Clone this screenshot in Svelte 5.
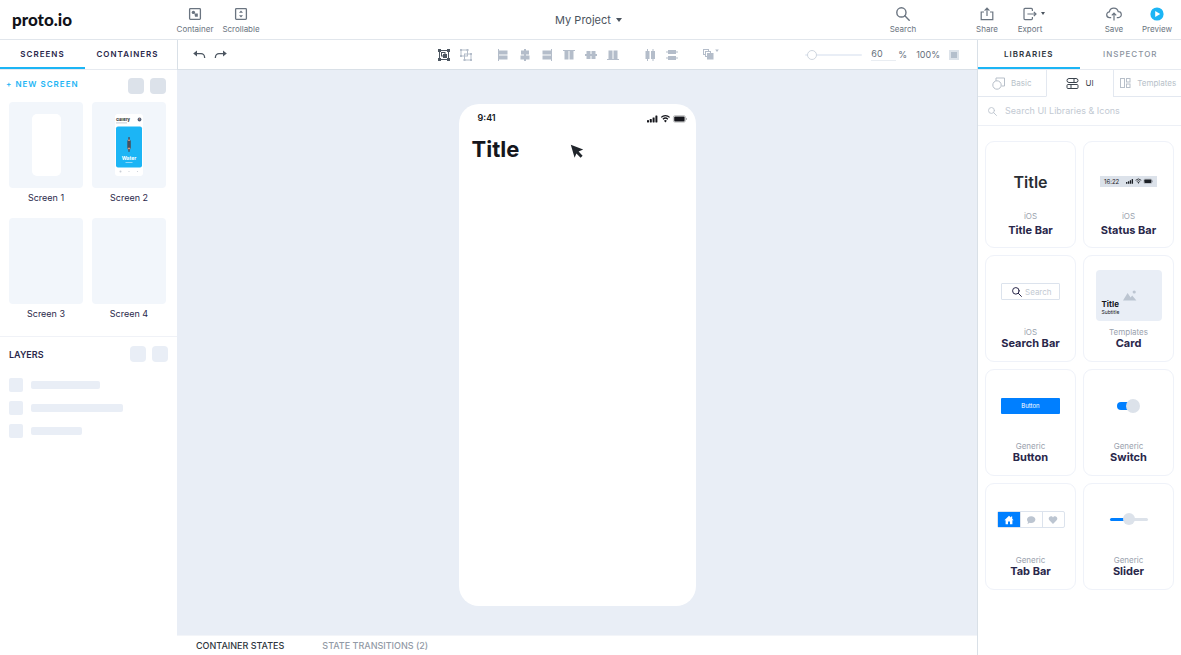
<script>
  let leftTab = $state('Screens');
  let rightTab = $state('Libraries');
  let library = $state('UI');
  let bottomTab = $state('Container states');
  let zoom = $state(60);

  const screens = ['Screen 1', 'Screen 2', 'Screen 3', 'Screen 4'];
  const layers = [69, 92, 51];

  const widgets = [
    { kind: 'title', source: 'iOS', name: 'Title Bar', spaced: true },
    { kind: 'status', source: 'iOS', name: 'Status Bar', spaced: true },
    { kind: 'search', source: 'iOS', name: 'Search Bar' },
    { kind: 'card', source: 'Templates', name: 'Card' },
    { kind: 'button', source: 'Generic', name: 'Button' },
    { kind: 'switch', source: 'Generic', name: 'Switch' },
    { kind: 'tabs', source: 'Generic', name: 'Tab Bar' },
    { kind: 'slider', source: 'Generic', name: 'Slider' },
  ];

  // align + distribute icons, as rects on a 14x14 grid
  const align = [
    { label: 'Align left', rects: [[2, 1, 1, 12], [3, 2.5, 8.5, 4], [3, 7.5, 8.5, 4]] },
    { label: 'Align center', rects: [[6, 1, 2, 12], [3, 2.5, 8, 4], [2.5, 7.5, 9, 4]] },
    { label: 'Align right', rects: [[11, 1, 1, 12], [2.5, 2.5, 8.5, 4], [2.5, 7.5, 8.5, 4]] },
    { label: 'Align top', rects: [[1, 2, 12, 1], [2.5, 3, 4, 8.5], [7.5, 3, 4, 8.5]] },
    { label: 'Align middle', rects: [[1, 6, 12, 2], [2.5, 3, 4, 8], [7.5, 3, 4, 8]] },
    { label: 'Align bottom', rects: [[1, 11, 12, 1], [2.5, 2.5, 4, 8.5], [7.5, 2.5, 4, 8.5]] },
  ];
  const distribute = [
    { label: 'Distribute horizontally', rects: [[2.5, 3, 4, 8], [8, 3, 4, 8], [4, 1, 1, 12], [9.5, 1, 1, 12]] },
    { label: 'Distribute vertically', rects: [[3, 2, 8, 4], [3, 8, 8, 4], [1, 3.5, 12, 1], [1, 9.5, 12, 1]] },
  ];
</script>

{#snippet magnifier(size)}
  <svg width={size} height={size} viewBox="0 0 14 14" fill="none" stroke="currentColor" stroke-width="1.4" stroke-linecap="round">
    <circle cx="5.4" cy="5.4" r="4.6" />
    <path d="M8.8 8.8 13.2 13.2" />
  </svg>
{/snippet}

{#snippet signal(width)}
  <svg {width} viewBox="0 0 40 9" fill="currentColor">
    <rect x="0" y="6" width="2" height="2.4" rx=".4" />
    <rect x="2.8" y="5" width="2" height="3.4" rx=".4" />
    <rect x="5.6" y="3.4" width="2" height="5" rx=".4" />
    <rect x="8.4" y="1.6" width="2" height="6.8" rx=".4" />
    <path d="M14.2 3.4a6 6 0 0 1 8.4 0M15.9 5.2a3.6 3.6 0 0 1 5 0" fill="none" stroke="currentColor" stroke-width="1.2" />
    <path d="m18.4 8.4-1.4-1.6a2 2 0 0 1 2.8 0z" />
    <rect x="26.4" y="1.6" width="12" height="6.6" rx="1.6" fill="none" stroke="currentColor" stroke-width=".5" opacity=".5" />
    <rect x="27.2" y="2.4" width="10.4" height="5" rx="1" />
    <path d="M39 3.8v2.2q.8-.4.8-1.1t-.8-1.1" opacity=".5" />
  </svg>
{/snippet}

{#snippet rectIcon(icon)}
  <button class="tool" aria-label={icon.label}>
    <svg width="14" height="14" fill="currentColor">
      {#each icon.rects as [x, y, width, height]}
        <rect {x} {y} {width} {height} />
      {/each}
    </svg>
  </button>
{/snippet}

<div class="app">
  <header class="topbar">
    <div class="top-left">
      <a class="logo" href="#home">proto.io</a>
      <button class="action">
        <svg width="14" height="14" fill="none" stroke="currentColor" stroke-width="1.3">
          <rect x="1.6" y="1.6" width="10.8" height="10.8" rx=".8" />
          <circle cx="5.4" cy="5.4" r="1.7" fill="currentColor" stroke="none" />
          <path d="M6.4 6.4h3.4v3.4H7z" fill="currentColor" stroke="none" />
        </svg>
        Container
      </button>
      <button class="action">
        <svg width="14" height="14" fill="none" stroke="currentColor" stroke-width="1.3">
          <rect x="1.6" y="1.6" width="10.8" height="10.8" rx=".8" />
          <path d="m7 3.4 2 2.4H5zM7 10.6l2-2.4H5z" fill="currentColor" stroke="none" />
        </svg>
        Scrollable
      </button>
    </div>
    <button class="project">My Project <span class="caret"></span></button>
    <div class="top-right">
      <div class="actions">
        <button class="action">{@render magnifier(14)}Search</button>
      </div>
      <div class="actions">
        <button class="action">
          <svg width="14" height="14" fill="none" stroke="currentColor" stroke-width="1.2">
            <path d="M4 5H1.2v7.6h11.6V5H10M7 9V1.4M4.6 3.6 7 1.2l2.4 2.4" />
          </svg>
          Share
        </button>
        <button class="action">
          <span class="with-caret">
            <svg width="14" height="14" fill="none" stroke="currentColor" stroke-width="1.2">
              <path d="M9.4 4V2.4a1 1 0 0 0-1-1H2a1 1 0 0 0-1 1v9.2a1 1 0 0 0 1 1h6.4a1 1 0 0 0 1-1V10M4.4 7H13M10.8 4.8 13 7l-2.2 2.2" />
            </svg>
            <span class="caret small"></span>
          </span>
          Export
        </button>
      </div>
      <div class="actions">
        <button class="action">
          <svg width="16" height="14" fill="none" stroke="currentColor" stroke-width="1.2">
            <path d="M5.2 10.6H3.8a2.9 2.9 0 0 1-.4-5.8 4.5 4.5 0 0 1 8.8-.2 3 3 0 0 1 .2 6h-1.6M8 13.4V6.2M5.8 8.4 8 6.2l2.200 2.200" />
          </svg>
          Save
        </button>
        <button class="action">
          <svg width="14" height="14">
            <circle cx="7" cy="7" r="6.6" fill="#1cb5f5" />
            <path d="M5.2 4v6l5-3z" fill="#fff" />
          </svg>
          Preview
        </button>
      </div>
    </div>
  </header>

  <main class="workspace">
    <aside class="left">
      <div class="tabs">
        {#each ['Screens', 'Containers'] as tab}
          <button class:active={leftTab === tab} onclick={() => (leftTab = tab)}>{tab}</button>
        {/each}
      </div>
      <div class="panel-head">
        <button class="new-screen">+ New screen</button>
        <div class="squares dark"><span></span><span></span></div>
      </div>
      <div class="screens">
        {#each screens as name, i}
          <figure>
            <div class="thumb">
              {#if i === 0}
                <div class="blank"></div>
              {:else if i === 1}
                <svg width="28" height="62">
                  <rect width="28" height="62" rx="3" fill="#fff" />
                  <text x="1" y="7" font-size="4" font-weight="700" fill="#222">Gallery</text>
                  <rect x="1" y="8.4" width="11" height="1" fill="#c9ccd2" />
                  <circle cx="24.5" cy="5.5" r="1.9" fill="#51627c" />
                  <circle cx="24.5" cy="5" r=".8" fill="#c98f78" />
                  <rect x="1" y="12.5" width="26" height="41" rx="2" fill="#1cb5f5" />
                  <path d="M13.4 23h1.2l.3 2.6.9 1.400v7l-1.100 2.200-.2 1.800h-1l-.2-1.800-1-2.200v-7l.9-1.400z" fill="#47505f" />
                  <path d="M13.2 25.6h1.600V27h-1.600zM12.800 33.800h2.400v1.400h-2.400z" fill="#d79a80" />
                  <text x="14" y="46" font-size="5" font-weight="700" fill="#fff" text-anchor="middle">Water</text>
                  <rect x="10.5" y="48" width="7" height="1" fill="#8fd9f9" />
                  <g fill="#c9ced6">
                    <circle cx="5.5" cy="57.5" r="1" />
                    <circle cx="14" cy="57.5" r=".6" />
                    <circle cx="22.5" cy="57.5" r=".6" />
                  </g>
                </svg>
              {/if}
            </div>
            <figcaption>{name}</figcaption>
          </figure>
        {/each}
      </div>
      <section class="layers">
        <div class="layers-head">
          <h2>Layers</h2>
          <div class="squares"><span></span><span></span></div>
        </div>
        {#each layers as width}
          <div class="layer"><i></i><b style="width: {width}px"></b></div>
        {/each}
      </section>
    </aside>

    <section class="center">
      <div class="toolbar">
        <div class="tools history">
          <button class="tool" aria-label="Undo">
            <svg width="14" height="14" fill="none" stroke="currentColor" stroke-width="1.3">
              <path d="M3 5.6h6a3.6 3.6 0 0 1 3.600 3.600V10" />
              <path d="M5 2.600v6L1.200 5.600z" fill="currentColor" stroke="none" />
            </svg>
          </button>
          <button class="tool" aria-label="Redo">
            <svg width="14" height="14" fill="none" stroke="currentColor" stroke-width="1.3">
              <path d="M11 5.600H5a3.600 3.600 0 0 0-3.600 3.600V10" />
              <path d="M9 2.600v6l3.800-3z" fill="currentColor" stroke="none" />
            </svg>
          </button>
        </div>
        <div class="tool-groups">
          <div class="tools">
            <button class="tool on" aria-label="Group">
              <svg width="14" height="14" fill="none" stroke="currentColor">
                <rect x="2.5" y="2.5" width="9" height="9" />
                <path d="M1 1h3v3H1zM10 1h3v3h-3zM1 10h3v3H1zM10 10h3v3h-3z" fill="currentColor" stroke="none" />
                <rect x="4.5" y="4.5" width="3.5" height="3.5" />
                <rect x="6.5" y="6.5" width="3" height="3" fill="currentColor" />
              </svg>
            </button>
            <button class="tool" aria-label="Ungroup">
              <svg width="14" height="14" fill="none" stroke="currentColor">
                <rect x="2" y="2" width="6.5" height="6" />
                <rect x="5.5" y="6" width="6.5" height="6" />
                <path d="M1 1h2v2H1zM7.500 1h2v2h-2zM1 7h2v2H1zM11 5h2v2h-2zM4.500 11h2v2h-2zM11 11h2v2h-2z" fill="currentColor" stroke="none" />
              </svg>
            </button>
          </div>
          <div class="tools">
            {#each align as icon}{@render rectIcon(icon)}{/each}
          </div>
          <div class="tools">
            {#each distribute as icon}{@render rectIcon(icon)}{/each}
          </div>
          <button class="tool" aria-label="Arrange">
            <svg width="17" height="14" fill="none" stroke="currentColor">
              <rect x="1.5" y="1.5" width="5" height="5" />
              <rect x="3.5" y="3.5" width="5" height="5" fill="#fff" />
              <rect x="5.500" y="5.500" width="5.500" height="5.500" fill="currentColor" />
              <path d="M13.200 1.600h3.600L15 4z" fill="currentColor" stroke="none" />
            </svg>
          </button>
        </div>
        <div class="zoom">
          <input class="zoom-range" type="range" min="50" max="400" bind:value={zoom} aria-label="Zoom" />
          <label><input class="zoom-value" type="text" bind:value={zoom} />%</label>
          <button class="full">100%</button>
          <button class="fit" aria-label="Fit to screen"></button>
        </div>
      </div>

      <div class="canvas">
        <div class="phone">
          <div class="phone-status">
            <span>9:41</span>
            {@render signal(40)}
          </div>
          <h1>Title</h1>
          <svg class="cursor" width="14" height="15" viewBox="0 0 14 15">
            <path d="m.8.8 12.400 4.600-4.600 2.200 4 4.200-2 2-4.200-4.400-1.800 4.400z" fill="#20252b" />
          </svg>
        </div>
      </div>

      <footer class="states">
        {#each ['Container states', 'State transitions (2)'] as tab}
          <button class:active={bottomTab === tab} onclick={() => (bottomTab = tab)}>{tab}</button>
        {/each}
      </footer>
    </section>

    <aside class="right">
      <div class="tabs even">
        {#each ['Libraries', 'Inspector'] as tab}
          <button class:active={rightTab === tab} onclick={() => (rightTab = tab)}>{tab}</button>
        {/each}
      </div>
      <div class="sources">
        <button class:active={library === 'Basic'} onclick={() => (library = 'Basic')}>
          <svg width="13" height="13" fill="none" stroke="currentColor">
            <path d="M4 4V1h8.5v8H9.500" />
            <circle cx="5" cy="8" r="4.200" />
          </svg>
          Basic
        </button>
        <button class:active={library === 'UI'} onclick={() => (library = 'UI')}>
          <svg width="13" height="13" fill="none" stroke="currentColor">
            <rect x="1" y="1.500" width="11" height="4" rx="2" />
            <path d="M8 1.500v4M5 7.500v4" />
            <rect x="1" y="7.500" width="11" height="4" rx="1" />
          </svg>
          UI
        </button>
        <button class:active={library === 'Templates'} onclick={() => (library = 'Templates')}>
          <svg width="12" height="12" fill="none" stroke="currentColor">
            <rect x="1.500" y="1.500" width="4" height="9" />
            <rect x="7.500" y="1.500" width="3.500" height="3.500" />
            <rect x="7.500" y="7" width="3.500" height="3.500" />
          </svg>
          Templates
        </button>
      </div>
      <label class="lib-search">
        {@render magnifier(9)}
        <input type="text" placeholder="Search UI Libraries &amp; Icons" aria-label="Search UI Libraries &amp; Icons" />
      </label>
      <div class="widgets">
        {#each widgets as w}
          <article class="widget" class:spaced={w.spaced}>
            <div class="preview">
              {#if w.kind === 'title'}
                <span class="w-title">Title</span>
              {:else if w.kind === 'status'}
                <div class="w-status"><span>16:22</span>{@render signal(27)}</div>
              {:else if w.kind === 'search'}
                <label class="w-search">
                  {@render magnifier(10)}
                  <input type="text" placeholder="Search" aria-label="Search" />
                </label>
              {:else if w.kind === 'card'}
                <div class="w-card">
                  <div><strong>Title</strong><small>Subtitle</small></div>
                  <svg width="14" height="11" fill="#bcc5d1">
                    <path d="M0 10.500 4.600 3l3 4.400L9.200 5.600l4.200 4.900z" />
                    <circle cx="11.200" cy="2" r="1.600" />
                  </svg>
                </div>
              {:else if w.kind === 'button'}
                <button class="w-button">Button</button>
              {:else if w.kind === 'switch'}
                <input class="w-switch" type="checkbox" checked aria-label="Switch" />
              {:else if w.kind === 'tabs'}
                <div class="w-tabs">
                  <button class="active" aria-label="Home">
                    <svg width="10" height="10" fill="currentColor"><path d="M5 .8.4 5.200h1.200v4H4V6.600h2v2.600h2.400v-4h1.200L8.200 3.800V1.400H7v1.200z" /></svg>
                  </button>
                  <button aria-label="Messages">
                    <svg width="10" height="10" fill="currentColor"><path d="M5.200 1.200c2.400 0 4.200 1.500 4.200 3.400S7.600 8 5.200 8q-.8 0-1.500-.2Q2.600 8.800 1.200 8.800q.8-.9.8-1.900Q1 6 1 4.600c0-1.900 1.800-3.400 4.200-3.400" /></svg>
                  </button>
                  <button aria-label="Favorites">
                    <svg width="10" height="10" fill="currentColor"><path d="M5 9 1.600 5.600C-.4 3.400 1.200 1.200 3 1.200c1 0 1.600.5 2 1.200.4-.7 1-1.200 2-1.200 1.800 0 3.400 2.200 1.400 4.400z" /></svg>
                  </button>
                </div>
              {:else}
                <input class="w-slider" type="range" value="50" aria-label="Slider" />
              {/if}
            </div>
            <span class="source">{w.source}</span>
            <h3>{w.name}</h3>
          </article>
        {/each}
      </div>
    </aside>
  </main>
</div>

<style>
  :global(body) {
    margin: 0;
  }
  .app {
    --blue: #1cb5f5;
    --ink: #29274a;
    --line: #d9e0e7;
    --soft: #e9eef6;
    display: flex;
    flex-direction: column;
    min-height: 100vh;
    background: #fff;
    color: var(--ink);
    font-family: Inter, 'Liberation Sans', sans-serif;
    font-size: 8px;
    line-height: 12px;
  }
  .app * {
    box-sizing: border-box;
  }
  .app svg {
    display: block;
    flex: none;
  }
  button {
    border: 0;
    padding: 0;
    background: none;
    font: inherit;
    color: inherit;
    cursor: pointer;
  }
  input {
    border: 0;
    padding: 0;
    margin: 0;
    background: none;
    font: inherit;
    color: inherit;
    min-width: 0;
  }
  h1,
  h2,
  h3,
  figure {
    margin: 0;
  }

  /* top bar */
  .topbar {
    display: grid;
    grid-template-columns: 1fr auto 1fr;
    align-items: center;
    height: 40px;
    padding-right: 4px;
    border-bottom: 1px solid #e1e6ec;
    color: #6a7480;
  }
  .top-left {
    display: flex;
    align-items: center;
    gap: 2px;
  }
  .top-left .action {
    width: 44px;
  }
  .logo {
    width: 171px;
    padding-left: 12px;
    font-family: Lato, Inter, sans-serif;
    font-size: 17px;
    font-weight: 900;
    line-height: 20px;
    color: #111219;
    text-decoration: none;
  }
  .action {
    display: flex;
    flex-direction: column;
    align-items: center;
    gap: 2px;
    width: 40px;
    padding-top: 2px;
  }
  .project {
    display: flex;
    align-items: center;
    gap: 5px;
    font-size: 11px;
    color: #4b545e;
  }
  .caret {
    border: 3px solid transparent;
    border-top: 4px solid #4b545e;
    border-bottom: 0;
  }
  .caret.small {
    border-width: 3px 2px 0;
  }
  .with-caret {
    display: flex;
    align-items: center;
    gap: 4px;
    padding-left: 8px;
  }
  .top-right {
    display: flex;
    justify-content: flex-end;
    gap: 44px;
  }
  .actions {
    display: flex;
    gap: 3px;
  }

  .workspace {
    flex: 1;
    display: grid;
    grid-template-columns: 177px 1fr 204px;
  }

  /* shared tabs */
  .tabs {
    display: flex;
    height: 30px;
    border-bottom: 1px solid #e6eaf0;
  }
  .tabs button {
    width: 85px;
    border-bottom: 2px solid transparent;
    font-weight: 600;
    letter-spacing: 1px;
    text-transform: uppercase;
  }
  .tabs .active {
    border-color: var(--blue);
  }
  .tabs.even button {
    flex: 1;
    font-weight: 500;
    color: #8a929d;
  }
  .tabs.even .active {
    font-weight: 600;
    color: #2f363e;
  }

  /* left panel */
  .panel-head {
    display: flex;
    align-items: center;
    justify-content: space-between;
    height: 32px;
    padding: 0 11px 0 6px;
  }
  .new-screen {
    padding-bottom: 4px;
    font-weight: 600;
    letter-spacing: 1px;
    text-transform: uppercase;
    color: var(--blue);
  }
  .squares {
    display: flex;
    gap: 6px;
  }
  .squares span {
    width: 16px;
    height: 16px;
    border-radius: 4px;
    background: var(--soft);
  }
  .squares.dark span {
    background: #dce2ea;
  }
  .screens {
    display: grid;
    grid-template-columns: 1fr 1fr;
    gap: 14px 9px;
    padding: 0 11px 16px 9px;
    border-bottom: 1px solid #f0f2f7;
  }
  .thumb {
    display: flex;
    align-items: center;
    justify-content: center;
    height: 86px;
    border-radius: 4px;
    background: #f2f6fb;
  }
  .blank {
    width: 29px;
    height: 62px;
    border-radius: 5px;
    background: #fff;
  }
  figcaption {
    margin-top: 4px;
    font-size: 9px;
    text-align: center;
  }
  .layers {
    display: flex;
    flex-direction: column;
    gap: 9px;
    padding: 9px 9px 0;
  }
  .layers-head {
    display: flex;
    align-items: center;
    justify-content: space-between;
    margin-bottom: 7px;
  }
  h2 {
    padding-top: 2px;
    font-size: 9px;
    font-weight: 600;
    text-transform: uppercase;
  }
  .layer {
    display: flex;
    align-items: center;
    gap: 8px;
  }
  .layer i,
  .layer b {
    height: 14px;
    width: 14px;
    border-radius: 2px;
    background: var(--soft);
  }
  .layer b {
    height: 8px;
  }

  /* canvas column */
  .center {
    display: flex;
    flex-direction: column;
  }
  .toolbar {
    display: grid;
    grid-template-columns: 1fr auto 1fr;
    align-items: center;
    height: 30px;
    padding: 0 14px;
    border: 1px solid var(--line);
    border-top: 0;
    border-right: 0;
    color: #b4bdca;
  }
  .tools {
    display: flex;
    gap: 8px;
  }
  .history,
  .tool.on {
    color: #4c5661;
  }
  .tool-groups {
    display: flex;
    gap: 23px;
  }
  .zoom {
    display: flex;
    align-items: center;
    justify-content: flex-end;
    gap: 9px;
    padding-right: 4px;
    font-size: 9px;
    color: #66707b;
  }
  .zoom label {
    display: flex;
    align-items: center;
    gap: 2px;
  }
  .zoom-range {
    appearance: none;
    width: 57px;
    height: 10px;
  }
  .zoom-range::-webkit-slider-runnable-track {
    height: 2px;
    border-radius: 1px;
    background: var(--soft);
  }
  .zoom-range::-webkit-slider-thumb {
    appearance: none;
    width: 10px;
    height: 10px;
    margin-top: -4px;
    border: 1px solid #cfd6df;
    border-radius: 50%;
    background: #fff;
  }
  .zoom-value {
    width: 25px;
    height: 12px;
    border-bottom: 1px solid #e9edf2;
  }
  .fit {
    width: 10px;
    height: 10px;
    border: 2px solid #dde3ea;
    background: #b4bfcc;
  }
  .canvas {
    flex: 1;
    display: flex;
    justify-content: center;
    align-items: flex-start;
    padding: 34px 0 29px;
    background: var(--soft);
  }
  .phone {
    position: relative;
    width: 237px;
    height: 502px;
    padding: 8px 9px 0 13px;
    border-radius: 20px;
    background: #fff;
    color: #15161c;
  }
  .phone-status {
    display: flex;
    align-items: center;
    justify-content: space-between;
    padding-left: 6px;
    font-size: 9px;
    font-weight: 600;
  }
  h1 {
    margin-top: 11px;
    font-size: 22px;
    font-weight: 700;
    line-height: 28px;
  }
  .cursor {
    position: absolute;
    top: 40px;
    left: 111px;
  }
  .states {
    display: flex;
    gap: 38px;
    height: 20px;
    padding: 0 19px;
    border-top: 1px solid #f3f5f9;
    font-size: 9px;
  }
  .states button {
    font-weight: 500;
    text-transform: uppercase;
    color: #929aa6;
  }
  .states .active {
    color: #2f363e;
  }

  /* right panel */
  .right {
    border-left: 1px solid var(--line);
  }
  .sources {
    display: grid;
    grid-template-columns: repeat(3, 1fr);
    height: 27px;
  }
  .sources button {
    display: flex;
    align-items: center;
    justify-content: center;
    gap: 6px;
    border: solid #e3e8f0;
    border-width: 0 0 1px;
    color: #b7bfc9;
  }
  .sources button + button {
    border-left-width: 1px;
  }
  .sources .active {
    border-bottom-color: transparent;
    color: #39424c;
  }
  .lib-search {
    display: flex;
    align-items: center;
    gap: 8px;
    height: 29px;
    padding: 0 10px;
    border-bottom: 1px solid #edf0f6;
    font-size: 9px;
    color: #bcc4ce;
  }
  .lib-search input {
    flex: 1;
  }
  input::placeholder {
    color: #c3cad3;
    opacity: 1;
  }
  .widgets {
    display: grid;
    grid-template-columns: 1fr 1fr;
    gap: 7px;
    padding: 15px 7px;
  }
  .widget {
    display: flex;
    flex-direction: column;
    align-items: center;
    height: 107px;
    border: 1px solid #eff2f9;
    border-radius: 9px;
  }
  .preview {
    display: flex;
    align-items: center;
    justify-content: center;
    height: 71px;
  }
  .source {
    line-height: 10px;
    color: #9aa2ae;
  }
  h3 {
    font-size: 11px;
    font-weight: 700;
    line-height: 12px;
  }
  .spaced .preview {
    height: 69px;
    padding-top: 10px;
  }
  .spaced .source {
    margin-bottom: 3px;
  }
  .w-title {
    font-size: 16px;
    font-weight: 600;
    color: #2a2e34;
  }
  .w-status {
    display: flex;
    align-items: center;
    justify-content: space-between;
    width: 57px;
    height: 11px;
    padding: 0 4px;
    background: #dce2ea;
    font-size: 6px;
    color: #1c2026;
  }
  .w-search {
    display: flex;
    align-items: center;
    gap: 3px;
    width: 59px;
    height: 17px;
    padding-left: 10px;
    border: 1px solid #dce3ed;
    border-radius: 1px;
    color: var(--ink);
  }
  .w-search input {
    width: 30px;
  }
  .w-card {
    display: flex;
    align-items: flex-end;
    gap: 4px;
    width: 66px;
    height: 51px;
    margin-top: 8px;
    padding: 0 6px 5px;
    border-radius: 4px;
    background: var(--soft);
    color: #15161c;
  }
  .w-card strong,
  .w-card small {
    display: block;
    font-size: 8px;
    line-height: 9px;
  }
  .w-card small {
    font-size: 5px;
    line-height: 7px;
  }
  .w-card svg {
    margin-bottom: 15px;
  }
  .w-button {
    width: 59px;
    height: 16px;
    border-radius: 1px;
    background: #007fff;
    font-size: 6px;
    color: #fff;
  }
  .w-switch {
    appearance: none;
    display: flex;
    align-items: center;
    justify-content: flex-end;
    width: 23px;
    height: 14px;
  }
  .w-switch::before {
    content: '';
    width: 14px;
    height: 8px;
    margin-right: -5px;
    border-radius: 4px 0 0 4px;
    background: #007fff;
  }
  .w-switch::after {
    content: '';
    width: 14px;
    height: 14px;
    border-radius: 50%;
    background: #dce2ea;
  }
  .w-tabs {
    display: flex;
    height: 17px;
    border: 1px solid #dce3ed;
    border-radius: 2px;
  }
  .w-tabs button {
    display: flex;
    align-items: center;
    justify-content: center;
    width: 22px;
    color: #bcc5d1;
  }
  .w-tabs button + button {
    border-left: 1px solid #dce3ed;
  }
  .w-tabs .active {
    background: #007fff;
    color: #fff;
  }
  .w-slider {
    appearance: none;
    width: 38px;
    height: 12px;
  }
  .w-slider::-webkit-slider-runnable-track {
    height: 3px;
    border-radius: 2px;
    background: linear-gradient(90deg, #007fff 50%, #dce2ea 50%);
  }
  .w-slider::-webkit-slider-thumb {
    appearance: none;
    width: 12px;
    height: 12px;
    margin-top: -5px;
    border-radius: 50%;
    background: #dce2ea;
  }
</style>
